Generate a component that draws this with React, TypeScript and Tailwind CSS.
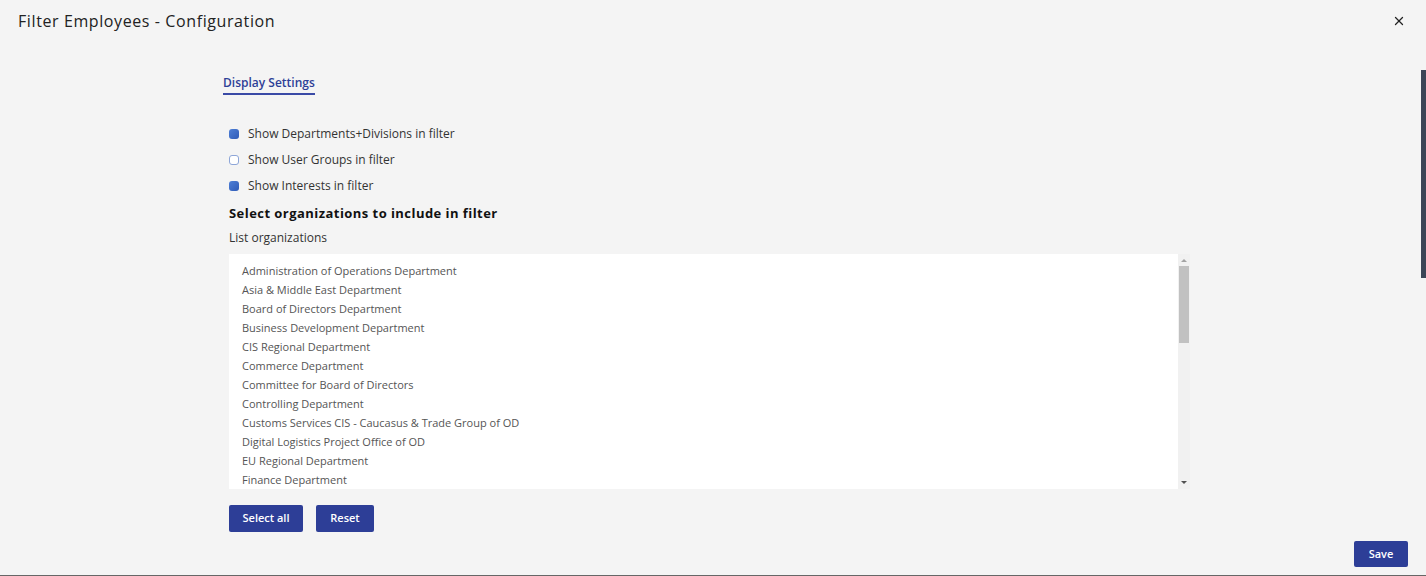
import { X } from 'lucide-react'

const orgs = [
  'Administration of Operations Department',
  'Asia & Middle East Department',
  'Board of Directors Department',
  'Business Development Department',
  'CIS Regional Department',
  'Commerce Department',
  'Committee for Board of Directors',
  'Controlling Department',
  'Customs Services CIS - Caucasus & Trade Group of OD',
  'Digital Logistics Project Office of OD',
  'EU Regional Department',
  'Finance Department',
]

const settings = [
  { label: 'Show Departments+Divisions in filter', checked: true },
  { label: 'Show User Groups in filter', checked: false },
  { label: 'Show Interests in filter', checked: true },
]

function Checkbox({ checked }: { checked: boolean }) {
  if (checked) {
    return <span className="w-[10px] h-[10px] rounded-[3px] bg-gradient-to-br from-[#4f7fd6] to-[#2f5bb7] shrink-0" />
  }
  return <span className="w-[10px] h-[10px] rounded-[3px] border border-[#8ea6d8] bg-white shrink-0" />
}

export default function App() {
  return (
    <div className="relative w-[1426px] h-[576px] bg-[#f4f4f4] overflow-hidden font-['Open_Sans',sans-serif] text-[#222]">
      <div className="flex items-center justify-between h-[42px] pl-[18px] pr-[20px]">
        <h1 className="text-[16px] tracking-[0.6px] text-[#222]">Filter Employees - Configuration</h1>
        <X size={14} strokeWidth={2.2} className="text-[#222]" />
      </div>

      <div className="ml-[223px] mt-[27px] w-[967px]">
        <div className="inline-block border-b-2 border-[#3a4aa6]">
          <span className="text-[12px] font-semibold text-[#2e3f97]">Display Settings</span>
        </div>

        <div className="ml-[6px] mt-[30px] flex flex-col gap-[8px]">
          {settings.map((s) => (
            <label key={s.label} className="flex items-center gap-[9px] h-[18px]">
              <Checkbox checked={s.checked} />
              <span className="text-[12px] text-[#333]">{s.label}</span>
            </label>
          ))}
        </div>

        <h2 className="ml-[6px] mt-[9px] text-[13px] font-bold tracking-[0.45px] text-[#111]">Select organizations to include in filter</h2>
        <div className="ml-[6px] mt-[5px] text-[12px] text-[#333]">List organizations</div>

        <div className="ml-[6px] mt-[7px] flex h-[235px] bg-white">
          <ul className="flex-1 pl-[13px] pt-[7px]">
            {orgs.map((o) => (
              <li key={o} className="h-[19px] leading-[19px] text-[11px] text-[#555]">{o}</li>
            ))}
          </ul>
          <div className="w-[12px] bg-[#f1f1f1] flex flex-col items-center">
            <svg width="12" height="12" viewBox="0 0 12 12"><path d="M3 8h6L6 5z" fill="#a3a3a3" /></svg>
            <div className="w-[10px] h-[77px] bg-[#c1c1c1]" />
            <div className="flex-1" />
            <svg width="12" height="12" viewBox="0 0 12 12"><path d="M3 4h6L6 7z" fill="#505050" /></svg>
          </div>
        </div>

        <div className="ml-[6px] mt-[16px] flex gap-[13px]">
          <button className="w-[74px] h-[27px] rounded-[2px] bg-[#2d3e97] text-white text-[11px] font-semibold">Select all</button>
          <button className="w-[58px] h-[27px] rounded-[2px] bg-[#2d3e97] text-white text-[11px] font-semibold">Reset</button>
        </div>
      </div>

      <button className="absolute right-[18px] bottom-[9px] w-[54px] h-[26px] rounded-[2px] bg-[#2d3e97] text-white text-[11px] font-semibold">Save</button>
      <div className="absolute right-0 top-[70px] w-[5px] h-[208px] bg-[#3b4556]" />
      <div className="absolute left-0 bottom-0 w-full h-[1px] bg-[#666]" />
    </div>
  )
}
